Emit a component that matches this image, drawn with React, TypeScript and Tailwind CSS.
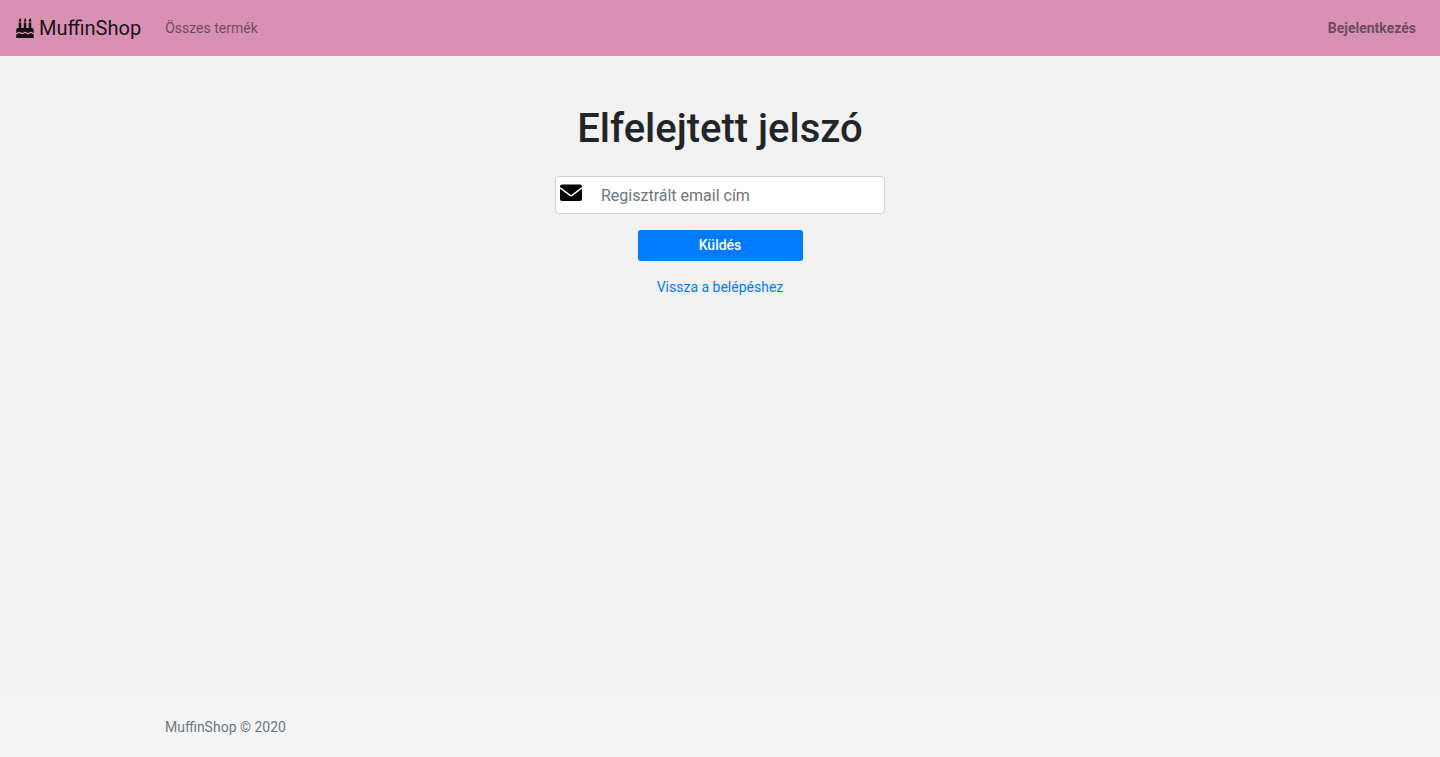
import { FaBirthdayCake } from 'react-icons/fa';

function EnvelopeIcon({ className }: { className?: string }) {
  return (
    <svg className={className} viewBox="0 0 22 17" fill="none" aria-hidden="true">
      <rect y="0.4" width="22" height="16.6" rx="2" fill="#000" />
      <path d="M0 3.8 9.8 11.1Q11 11.9 12.2 11.1L22 3.8" stroke="#fff" strokeWidth="1.5" />
    </svg>
  );
}

function Header() {
  return (
    <header className="bg-[#d891b2]">
      <nav className="flex h-14 items-center px-4">
        <a href="#" className="mr-4 flex items-center gap-[5px] text-xl text-black/90">
          <FaBirthdayCake className="h-5 w-[18px]" aria-hidden="true" />
          MuffinShop
        </a>
        <a href="#" className="px-2 text-sm text-black/50">
          Összes termék
        </a>
        <a href="#" className="ml-auto px-2 text-sm font-bold text-black/50">
          Bejelentkezés
        </a>
      </nav>
    </header>
  );
}

function ForgottenPasswordForm() {
  return (
    <main className="flex grow flex-col items-center px-4 pt-12">
      <h1 className="text-[40px] leading-[50px] font-medium">Elfelejtett jelszó</h1>
      <form className="mt-[22px] flex w-full max-w-[330px] flex-col items-center" onSubmit={(e) => e.preventDefault()}>
        <div className="relative w-full">
          <EnvelopeIcon className="absolute top-2 left-[5px] h-[17px] w-[22px]" />
          <input
            type="email"
            aria-label="Regisztrált email cím"
            placeholder="Regisztrált email cím"
            className="h-[38px] w-full rounded border border-[#ced4da] bg-white pr-3 pl-[45px] text-base text-[#495057] placeholder:text-[#6c757d]"
          />
        </div>
        <button
          type="submit"
          className="mt-4 w-1/2 rounded-[3px] bg-[#007bff] pt-[5px] pb-[6px] text-sm font-medium text-white"
        >
          Küldés
        </button>
      </form>
      <a href="#" className="mt-4 text-sm text-[#007bff]">
        Vissza a belépéshez
      </a>
    </main>
  );
}

export default function App() {
  return (
    <div className="flex min-h-screen flex-col bg-[#f2f2f2] font-[Roboto,sans-serif] text-[#212529]">
      <Header />
      <ForgottenPasswordForm />
      <footer className="flex h-15 items-center bg-[#f5f5f5]">
        <div className="mx-auto w-full max-w-[1140px] px-[15px] text-sm text-[#6c757d]">
          MuffinShop © 2020
        </div>
      </footer>
    </div>
  );
}
